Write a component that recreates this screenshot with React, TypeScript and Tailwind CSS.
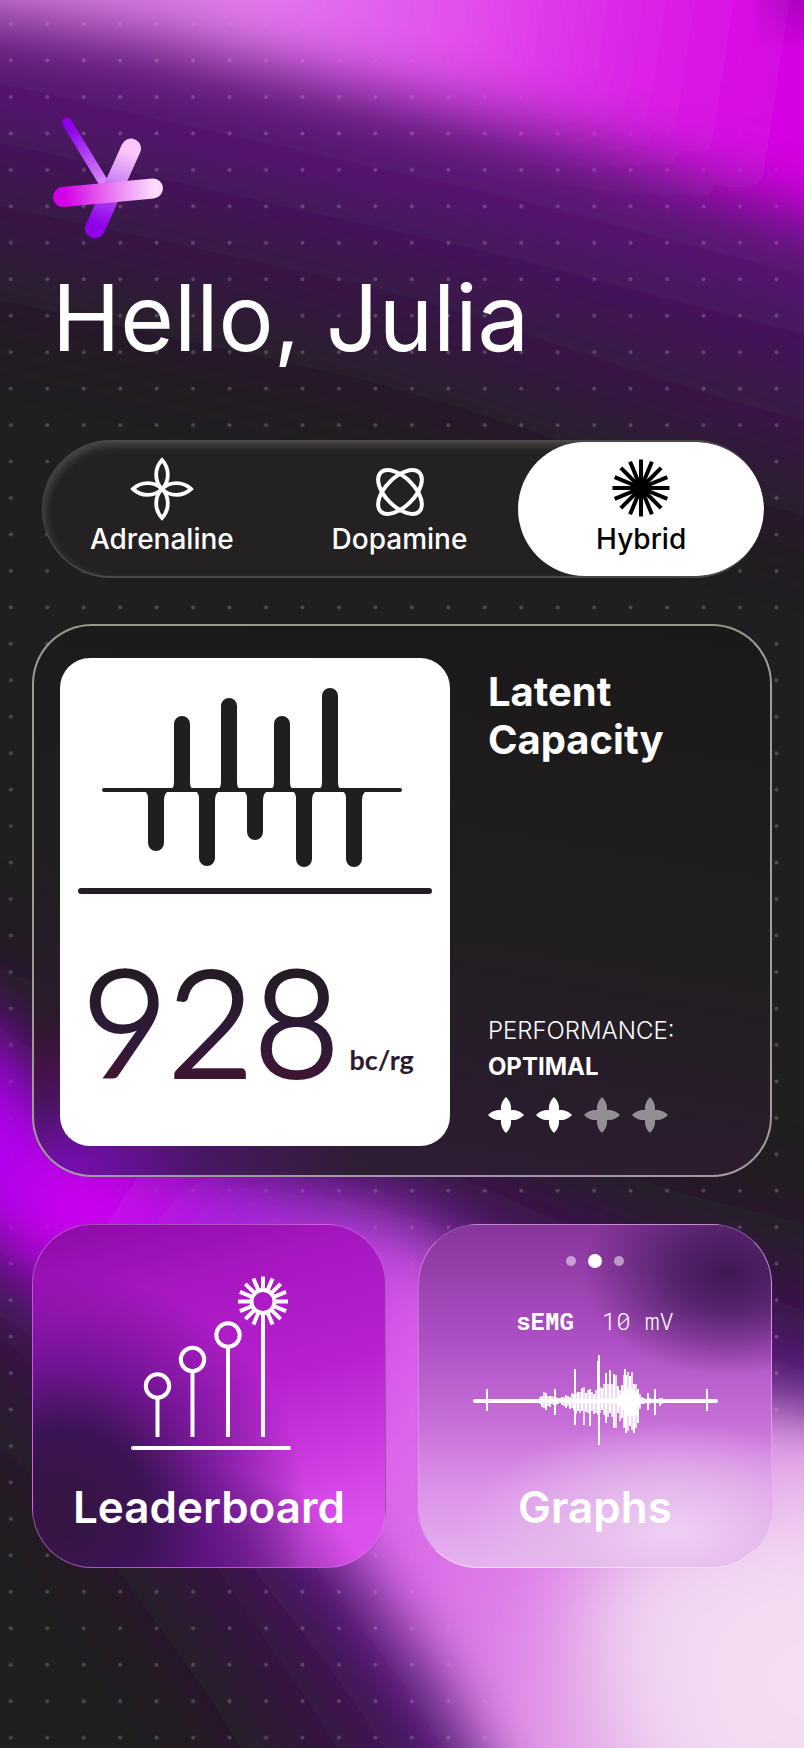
import { useState } from "react";
import type { ReactNode } from "react";
import clsx from "clsx";

type Mode = "adrenaline" | "dopamine" | "hybrid";

const RAYS = Array.from({ length: 16 }, (_, i) => i * 22.5);

// [x, length above the axis, length below the axis]
const SIGNAL: [number, number, number][] = [
  [65, 2, 2], [67, 4, 3], [69, 5, 6], [71, 9, 7], [73, 8, 9], [75, 5, 5], [77, 5, 6], [79, 5, 3],
  [81, 4, 4], [83, 4, 4], [85, 3, 3], [87, 3, 2], [89, 4, 4], [91, 4, 5], [93, 6, 7], [95, 5, 5],
  [97, 4, 8], [99, 8, 7], [101, 7, 9], [103, 8, 13], [105, 9, 10], [107, 9, 12], [109, 13, 10],
  [111, 14, 24], [113, 8, 11], [115, 11, 12], [117, 12, 25], [119, 9, 10], [121, 7, 13], [123, 11, 12],
  [125, 40, 14], [127, 14, 12], [129, 13, 9], [131, 17, 14], [133, 28, 22], [135, 17, 16], [137, 31, 12],
  [139, 17, 16], [141, 27, 27], [143, 26, 27], [145, 15, 12], [147, 11, 20], [149, 16, 17], [151, 26, 27],
  [153, 26, 32], [155, 29, 30], [157, 25, 25], [159, 29, 29], [161, 17, 32], [163, 17, 27], [165, 12, 22],
  [167, 7, 8], [169, 4, 3], [171, 3, 3], [175, 8, 9], [177, 3, 3], [187, 3, 5], [189, 3, 3],
];

const TICKS: [number, number, number][] = [
  [14, 34, 56], [82, 34, 60], [102, 14, 70], [126, 0, 90], [152, 14, 70], [182, 34, 60], [234, 34, 56],
];

const BARS_UP: [number, number][] = [[80, 28], [127, 10], [180, 28], [228, 0]];
const BARS_DOWN: [number, number][] = [[54, 163], [105, 178], [153, 152], [202, 179], [252, 179]];

function Backdrop() {
  return (
    <svg
      aria-hidden="true"
      className="absolute inset-0 h-full w-full"
      preserveAspectRatio="none"
      viewBox="0 0 804 1748"
    >
      <defs>
        <filter id="soft" x="-50%" y="-50%" width="200%" height="200%">
          <feGaussianBlur stdDeviation="32" />
        </filter>
        <filter id="softer" x="-50%" y="-50%" width="200%" height="200%">
          <feGaussianBlur stdDeviation="44" />
        </filter>
        <filter id="softest" x="-50%" y="-50%" width="200%" height="200%">
          <feGaussianBlur stdDeviation="70" />
        </filter>
        <linearGradient id="top-glow" gradientUnits="userSpaceOnUse" x1="0" y1="0" x2="804" y2="120">
          <stop offset="0" stopColor="#d683dc" />
          <stop offset="0.3" stopColor="#e67ff0" />
          <stop offset="0.55" stopColor="#e653f0" />
          <stop offset="0.8" stopColor="#e020ea" />
          <stop offset="1" stopColor="#d800e6" />
        </linearGradient>
        <linearGradient id="low-glow" gradientUnits="userSpaceOnUse" x1="0" y1="1130" x2="700" y2="1600">
          <stop offset="0" stopColor="#b000f0" />
          <stop offset="0.14" stopColor="#d400f4" />
          <stop offset="0.3" stopColor="#ab24e2" />
          <stop offset="0.42" stopColor="#bd42e2" />
          <stop offset="0.56" stopColor="#df62ee" />
          <stop offset="0.8" stopColor="#e27fec" />
          <stop offset="1" stopColor="#e7a6ea" />
        </linearGradient>
        <radialGradient id="pale" gradientUnits="userSpaceOnUse" cx="804" cy="1680" r="330">
          <stop offset="0" stopColor="#f7e2f4" />
          <stop offset="0.5" stopColor="#f0d6f1" />
          <stop offset="1" stopColor="#e9c8f1" />
        </radialGradient>
        <pattern id="dots" x="-7.4" y="5.8" width="36.46" height="36.46" patternUnits="userSpaceOnUse">
          <circle cx="18.2" cy="18.2" r="2" fill="#fff" fillOpacity="0.2" />
        </pattern>
      </defs>

      <rect width="804" height="1748" fill="#201e1f" />

      <path d="M-150 -150H960V510L700 440L400 340L-150 220Z" fill="#401752" filter="url(#softest)" />
      <path d="M-150 -100H960V340L804 305L500 225L-150 80Z" fill="#5c1278" filter="url(#softer)" />
      <path
        d="M-120 950L180 1110L420 1150L640 1230L960 1310V1900H380L260 1700L120 1500L0 1390L-120 1290Z"
        fill="#3a1748"
        filter="url(#softest)"
      />
      <path
        d="M-120 980L120 1140L400 1180L600 1270L860 1360V1850H480L370 1680L240 1510L90 1340L-120 1210Z"
        fill="#55127a"
        filter="url(#softer)"
      />

      <rect width="804" height="1748" fill="url(#dots)" />

      <path
        d="M-150 -90L960 -140V260L804 216L600 148L400 98L150 40L-150 -4Z"
        fill="url(#top-glow)"
        fillOpacity="0.97"
        filter="url(#soft)"
      />
      <circle cx="815" cy="-14" r="30" fill="#5c1078" filter="url(#soft)" />
      <path
        d="M-120 960L-20 1030L70 1140L240 1175L400 1220L540 1320L700 1390L940 1440V1850H530L445 1690L340 1540L195 1400L70 1290L-60 1200L-120 1160Z"
        fill="url(#low-glow)"
        fillOpacity="0.97"
        filter="url(#soft)"
      />
      <path
        d="M960 1480L780 1500L640 1530L580 1590L600 1720L680 1880H960Z"
        fill="url(#pale)"
        filter="url(#softer)"
      />
    </svg>
  );
}

function Logo() {
  return (
    <svg aria-label="Home" className="h-[122px] w-[112px]" role="img" viewBox="-1 0 112 122">
      <defs>
        <linearGradient id="logo-a" gradientUnits="userSpaceOnUse" x1="14" y1="5" x2="52" y2="66">
          <stop offset="0.1" stopColor="#8d00ea" />
          <stop offset="1" stopColor="#d98cfb" />
        </linearGradient>
        <linearGradient id="logo-b" gradientUnits="userSpaceOnUse" x1="78" y1="31" x2="42" y2="112">
          <stop offset="0.05" stopColor="#fbc6fb" />
          <stop offset="0.4" stopColor="#cf86f5" />
          <stop offset="0.65" stopColor="#aa38ee" />
          <stop offset="0.95" stopColor="#8f00e9" />
        </linearGradient>
        <linearGradient id="logo-c" gradientUnits="userSpaceOnUse" x1="0" y1="75" x2="110" y2="70">
          <stop offset="0.1" stopColor="#d100e6" />
          <stop offset="0.6" stopColor="#ec8bf3" />
          <stop offset="0.92" stopColor="#fcdcfc" />
        </linearGradient>
      </defs>
      <path d="M14 5.500L52 68" stroke="url(#logo-a)" strokeLinecap="round" strokeWidth="10" />
      <path d="M78 31.500L42 111.500" stroke="url(#logo-b)" strokeLinecap="round" strokeWidth="20" />
      <path d="M10 80L100 71.500" stroke="url(#logo-c)" strokeLinecap="round" strokeWidth="20" />
    </svg>
  );
}

function AdrenalineIcon() {
  return (
    <svg aria-hidden="true" className="h-16 w-16" fill="none" viewBox="0 0 64 64">
      {[0, 90, 180, 270].map((angle) => (
        <path
          d="M32 32C24 24 24.500 11 32 3C39.500 11 40 24 32 32Z"
          key={angle}
          stroke="currentColor"
          strokeWidth="3.800"
          transform={`rotate(${angle} 32 32)`}
        />
      ))}
    </svg>
  );
}

function DopamineIcon() {
  return (
    <svg aria-hidden="true" className="h-16 w-16" fill="none" viewBox="0 0 64 64">
      <g stroke="currentColor" strokeWidth="4">
        <ellipse cx="32" cy="35" rx="27.300" ry="14.400" transform="rotate(45 32 35)" />
        <ellipse cx="32" cy="35" rx="27.300" ry="14.400" transform="rotate(-45 32 35)" />
      </g>
    </svg>
  );
}

function HybridIcon() {
  return (
    <svg aria-hidden="true" className="h-16 w-16" fill="none" viewBox="0 0 64 64">
      <circle cx="32" cy="31" r="10" fill="currentColor" />
      {RAYS.map((angle) => (
        <path
          d="M32 31V2.500"
          key={angle}
          stroke="currentColor"
          strokeWidth="4"
          transform={`rotate(${angle} 32 31)`}
        />
      ))}
    </svg>
  );
}

const MODES: { id: Mode; label: string; icon: ReactNode }[] = [
  { id: "adrenaline", label: "Adrenaline", icon: <AdrenalineIcon /> },
  { id: "dopamine", label: "Dopamine", icon: <DopamineIcon /> },
  { id: "hybrid", label: "Hybrid", icon: <HybridIcon /> },
];

function CapacityWave() {
  return (
    <svg aria-hidden="true" className="h-[180px] w-[300px]" viewBox="0 0 300 180">
      <path d="M2 102H298" stroke="#201e1f" strokeLinecap="round" strokeWidth="4" />
      {BARS_UP.map(([x, y]) => (
        <path
          d={`M${x - 14} 102Q${x - 8} 102 ${x - 8} 94V${y + 8}a8 8 0 0 1 16 0V94Q${x + 8} 102 ${x + 14} 102Z`}
          fill="#201e1f"
          key={x}
        />
      ))}
      {BARS_DOWN.map(([x, y]) => (
        <path
          d={`M${x - 15} 102Q${x - 8} 103 ${x - 8} 110V${y - 8}a8 8 0 0 0 16 0V112Q${x + 8} 103 ${x + 16} 102Z`}
          fill="#201e1f"
          key={x}
        />
      ))}
    </svg>
  );
}

function Petal({ filled }: { filled: boolean }) {
  return (
    <svg
      aria-hidden="true"
      className={clsx("h-9 w-9", filled ? "text-white" : "text-[#938d94]")}
      viewBox="0 0 36 36"
    >
      <path
        d="M18 0C21 3 23.500 7 23 13C29 12.500 33 15 36 18C33 21 29 23.500 23 23C23.500 29 21 33 18 36C15 33 12.500 29 13 23C7 23.500 3 21 0 18C3 15 7 12.500 13 13C12.500 7 15 3 18 0Z"
        fill="currentColor"
      />
    </svg>
  );
}

function LeaderboardArt() {
  return (
    <svg aria-hidden="true" className="h-[174px] w-[164px]" fill="none" viewBox="-4 0 164 174">
      <g stroke="#fff" strokeWidth="4">
        <circle cx="26.500" cy="110" r="11.700" />
        <circle cx="61.500" cy="83.500" r="11.700" />
        <circle cx="97" cy="59" r="11.700" />
        <circle cx="132" cy="25.500" r="11.500" />
        <path d="M26.500 122V161M61.500 95V161M97 71V161M132 37V161" />
        {RAYS.map((angle) => (
          <path d="M132 13V0.500" key={angle} transform={`rotate(${angle} 132 25.500)`} />
        ))}
        <path d="M2 172H158" strokeLinecap="round" />
      </g>
    </svg>
  );
}

function SignalArt() {
  return (
    <svg aria-hidden="true" className="h-[90px] w-[245px]" viewBox="0 0 245 90">
      <path d="M2 46H243" stroke="#fff" strokeLinecap="round" strokeWidth="4" />
      {TICKS.map(([x, from, to]) => (
        <path d={`M${x} ${from}V${to}`} key={x} stroke="#fff" strokeWidth="2" />
      ))}
      {SIGNAL.map(([x, up, down], i) => (
        <path
          d={`M${x} ${46 - up}V${46 + down}`}
          key={x}
          stroke="#fff"
          strokeOpacity={i % 2 ? 0.75 : 1}
          strokeWidth="2"
        />
      ))}
      <path d="M140 46L150 36L158 32L166 40L168 46L164 60L156 62L150 54Z" fill="#fff" />
    </svg>
  );
}

export default function App() {
  const [mode, setMode] = useState<Mode>("hybrid");

  return (
    <div className="relative min-h-screen overflow-hidden bg-[#201e1f] font-['Inter',sans-serif] text-white">
      <Backdrop />

      <main className="relative px-8 pt-[117px] pb-[180px]">
        <header className="px-5">
          <Logo />
          <h1 className="mt-[19px] text-[92px] leading-[120px] font-normal">Hello, Julia</h1>
        </header>

        <div
          aria-label="Mode"
          className="mt-[62px] mr-2 ml-[10px] flex overflow-hidden rounded-full border-y-2 border-l border-[#4a484a] bg-[#232122] shadow-[inset_2px_4px_8px_#4a484a]"
          role="group"
        >
          {MODES.map(({ id, label, icon }) => (
            <button
              aria-pressed={mode === id}
              className={clsx(
                "flex flex-1 flex-col items-center rounded-full pt-[15px] pb-[19px] text-[28px] leading-9 font-medium",
                mode === id ? "bg-white px-5 text-black" : "px-4 text-white"
              )}
              key={id}
              onClick={() => setMode(id)}
              type="button"
            >
              {icon}
              {label}
            </button>
          ))}
        </div>

        <section className="mt-[46px] flex rounded-[60px] border-2 border-t-[#97978a] border-r-[#a19d9c] border-b-[#a498a8] border-l-[#a09a90] bg-[radial-gradient(ellipse_38%_26%_at_6%_98%,#780cb0_0%,#58128399_45%,transparent_100%),radial-gradient(ellipse_10%_14%_at_0%_82%,#3c1128_0%,transparent_100%),linear-gradient(190deg,#1a1819_0%,#201e1f_50%,#2b1c2f_82%,#33203a_100%)] px-[26px] pt-8 pb-[29px]">
          <div className="flex w-[57%] flex-col rounded-[30px] bg-white px-[18px] pt-[30px] pb-9 text-[#2b1a2f]">
            <div className="pl-6">
              <CapacityWave />
            </div>
            <hr className="mt-[20px] h-[6px] w-full rounded-full border-0 bg-[#231b25]" />
            <div className="mt-9 flex items-end gap-[10px] pl-1">
              <p className="bg-linear-to-b from-[#241b25] from-25% via-[#2f1a38] via-60% to-[#431230] to-90% bg-clip-text font-['Lato',sans-serif] text-[148px] leading-[180px] font-light text-transparent [-webkit-text-stroke:4px_transparent]">
                928
              </p>
              <p className="pb-[34px] font-['Lato',sans-serif] text-[27px] leading-8 font-bold">bc/rg</p>
            </div>
          </div>

          <div className="flex flex-1 flex-col justify-between pt-[10px] pb-[13px] pl-[38px]">
            <h2 className="text-[40px] leading-[48px] font-bold">
              Latent
              <br />
              Capacity
            </h2>
            <div>
              <p className="text-[24px] leading-9 font-light">PERFORMANCE:</p>
              <p className="text-[24px] leading-9 font-bold">OPTIMAL</p>
              <div aria-label="2 of 4" className="mt-3 flex gap-3" role="img">
                {[1, 2, 3, 4].map((step) => (
                  <Petal filled={step <= 2} key={step} />
                ))}
              </div>
            </div>
          </div>
        </section>

        <nav className="mt-[47px] grid grid-cols-2 gap-8">
          <a
            className="flex flex-col items-center rounded-[60px] border border-[#d27be0]/60 bg-[radial-gradient(ellipse_70%_70%_at_8%_84%,#341640_0%,#3b1454_35%,#5a1080b3_62%,transparent_100%),radial-gradient(ellipse_60%_36%_at_34%_104%,#4a1466_0%,#5c1878b3_50%,transparent_100%),linear-gradient(165deg,#8c0aa6_0%,#a617c0_22%,#b722ce_50%,#dc50ee_88%)] pt-[51px] pb-[30px]"
            href="#leaderboard"
          >
            <LeaderboardArt />
            <span className="mt-[27px] text-[44px] leading-[60px] font-semibold">Leaderboard</span>
          </a>

          <a
            className="flex flex-col items-center rounded-[60px] border border-t-[#a86bb4]/60 border-r-[#e6b4ee]/70 border-b-[#f3dcf5] border-l-[#dc9be6]/70 bg-[radial-gradient(ellipse_42%_30%_at_88%_14%,#3f1954_0%,#421a58cc_35%,transparent_100%),radial-gradient(ellipse_60%_32%_at_72%_90%,#eed0f3_0%,#e6bfecb3_50%,transparent_100%),linear-gradient(180deg,#87359b_0%,#ad4fc4_33%,#c76fd8_58%,#dc94e8_78%,#e5b2ee_100%)] pt-[29px] pb-[30px]"
            href="#graphs"
          >
            <span className="flex items-center gap-3">
              <span className="h-[10px] w-[10px] rounded-full bg-white/50" />
              <span className="h-[14px] w-[14px] rounded-full bg-white" />
              <span className="h-[10px] w-[10px] rounded-full bg-white/50" />
            </span>
            <span className="mt-[37px] flex gap-7 font-['Roboto_Mono','Liberation_Mono',monospace] text-[24px] leading-8">
              <span className="font-bold">sEMG</span>
              <span className="font-light">10 mV</span>
            </span>
            <span className="mt-[18px]">
              <SignalArt />
            </span>
            <span className="mt-[32px] text-[44px] leading-[60px] font-semibold">Graphs</span>
          </a>
        </nav>
      </main>
    </div>
  );
}
